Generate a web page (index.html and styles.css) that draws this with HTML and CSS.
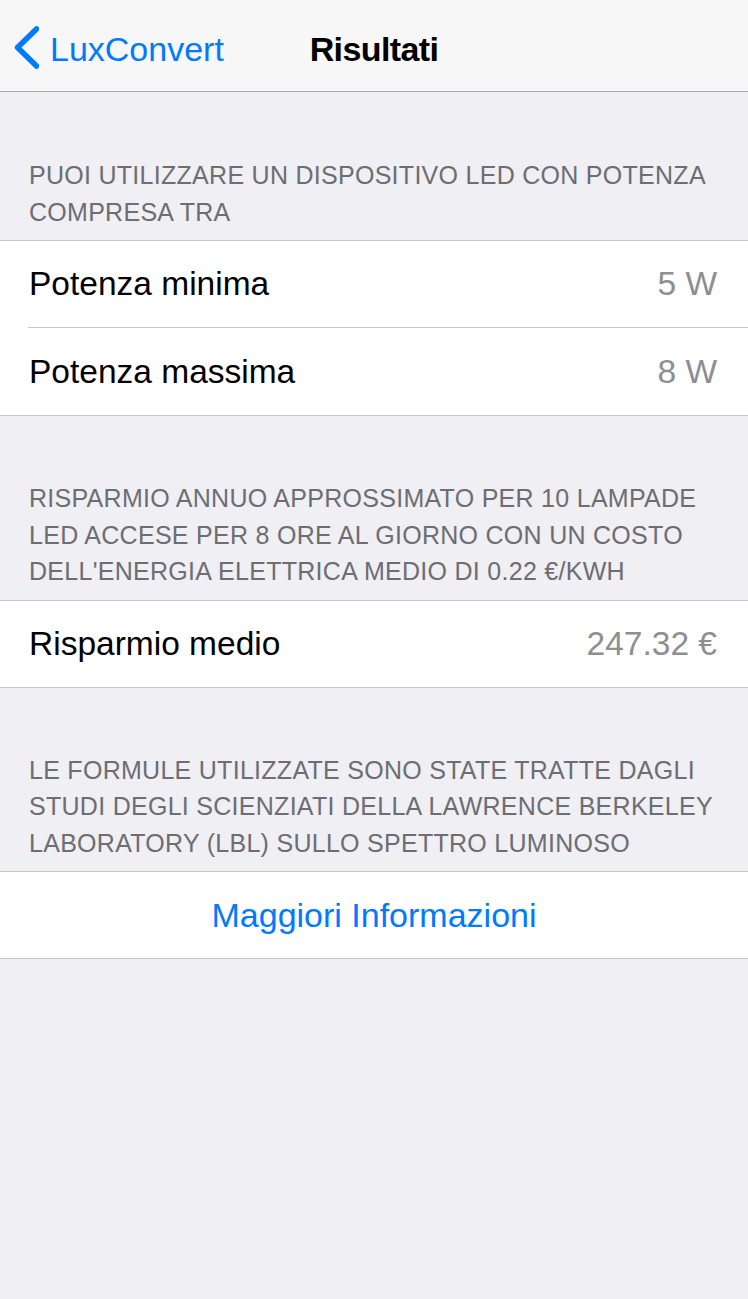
FILE: index.html
```html
<!DOCTYPE html>
<html lang="it">
<head>
<meta charset="utf-8">
<title>Risultati</title>
<link rel="stylesheet" href="styles.css">
</head>
<body>
<header class="navbar">
  <a class="nav-back" href="#">
    <svg class="chevron" width="27" height="44" viewBox="0 0 27 44" aria-hidden="true">
      <path d="M24.5 3 L5.5 21.5 L24.5 40" fill="none" stroke="#007aff" stroke-width="5.5" stroke-linecap="round" stroke-linejoin="round"/>
    </svg>
    <span>LuxConvert</span>
  </a>
  <h1 class="nav-title">Risultati</h1>
  <div class="nav-spacer"></div>
</header>

<main class="table">
  <section class="section">
    <p class="section-header">PUOI UTILIZZARE UN DISPOSITIVO LED CON POTENZA COMPRESA TRA</p>
    <div class="group">
      <div class="row row-sep"><span class="label">Potenza minima</span><span class="value">5 W</span></div>
      <div class="row row-tall"><span class="label">Potenza massima</span><span class="value">8 W</span></div>
    </div>
  </section>

  <section class="section">
    <p class="section-header">RISPARMIO ANNUO APPROSSIMATO PER 10 LAMPADE LED ACCESE PER 8 ORE AL GIORNO CON UN COSTO DELL'ENERGIA ELETTRICA MEDIO DI 0.22 €/KWH</p>
    <div class="group">
      <div class="row"><span class="label">Risparmio medio</span><span class="value">247.32 €</span></div>
    </div>
  </section>

  <section class="section">
    <p class="section-header">LE FORMULE UTILIZZATE SONO STATE TRATTE DAGLI STUDI DEGLI SCIENZIATI DELLA LAWRENCE BERKELEY LABORATORY (LBL) SULLO SPETTRO LUMINOSO</p>
    <div class="group">
      <a class="row row-link" href="#">Maggiori Informazioni</a>
    </div>
  </section>
</main>
</body>
</html>
```

FILE: styles.css
```css
* { box-sizing: border-box; }

html, body {
  margin: 0;
  padding: 0;
}

body {
  background: #efeff4;
  font-family: "Liberation Sans", Arial, sans-serif;
  color: #000;
  width: 748px;
  min-height: 1299px;
}

.navbar {
  height: 92px;
  padding-top: 7px;
  background: #f7f7f7;
  border-bottom: 1px solid #a9a9ad;
  display: grid;
  grid-template-columns: 1fr auto 1fr;
  align-items: center;
}

.nav-back {
  display: flex;
  align-items: center;
  gap: 11px;
  padding-left: 12px;
  color: #007aff;
  text-decoration: none;
  font-size: 34px;
  line-height: 1;
}

.chevron {
  display: block;
  margin-top: -2px;
}

.nav-title {
  margin: 0;
  font-size: 34px;
  font-weight: 700;
  letter-spacing: -0.6px;
  line-height: 1;
}

.section-header {
  margin: 0;
  padding: 65px 20px 10px 29px;
  font-size: 25px;
  line-height: 36.5px;
  letter-spacing: 0.28px;
  color: #6d6d72;
}

.section + .section .section-header {
  padding-top: 64px;
}

.group {
  background: #fff;
  border-top: 1px solid #c8c7cc;
  border-bottom: 1px solid #c8c7cc;
}

.row {
  position: relative;
  height: 86px;
  padding: 0 31px 0 29px;
  display: flex;
  align-items: center;
  justify-content: space-between;
  font-size: 33.5px;
}

.row-sep {
  height: 87px;
  border-bottom: 1px solid transparent;
}

.row-tall {
  height: 87px;
}

.row-sep::after {
  content: "";
  position: absolute;
  left: 28px;
  right: 0;
  bottom: -1px;
  height: 1px;
  background: #c8c7cc;
}

.value {
  color: #8e8e93;
}

.row-link {
  justify-content: center;
  color: #007aff;
  text-decoration: none;
  padding-left: 0;
  padding-right: 0;
  font-size: 34px;
}
```
